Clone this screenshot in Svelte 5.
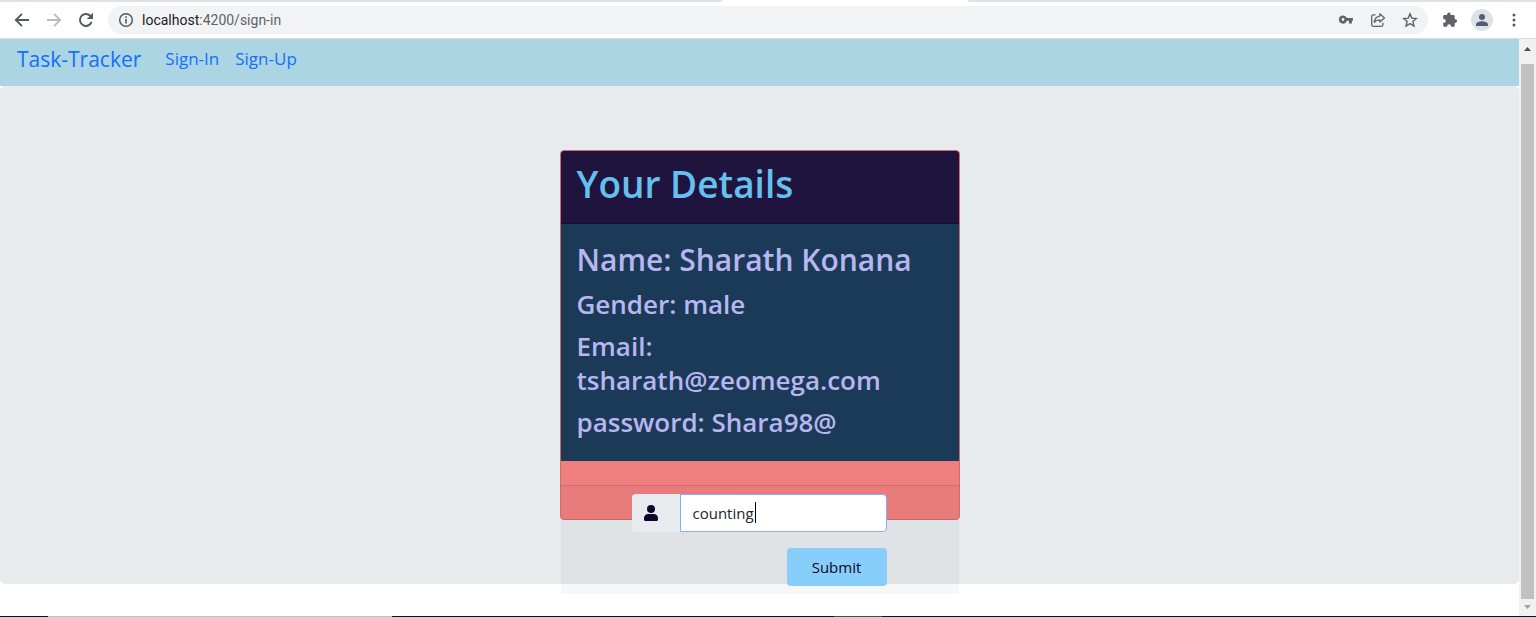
<script>
  let note = $state('counting');
  const details = [
    { label: 'Gender', value: 'male' },
    { label: 'Email', value: 'tsharath@zeomega.com' },
    { label: 'password', value: 'Shara98@' }
  ];
</script>

<div class="window">
  <div class="tabs"><span class="tab-left"></span><span class="tab-active"></span><span class="tab-right"></span></div>
  <header class="toolbar">
    <button aria-label="Back"><svg width="16" height="16" viewBox="0 0 16 16"><path d="M15 8H2.5M8 1.8 1.8 8 8 14.2" fill="none" stroke="#55595e" stroke-width="1.9" /></svg></button>
    <button aria-label="Forward"><svg width="16" height="16" viewBox="0 0 16 16"><path d="M1 8h12.5M8 1.8 14.2 8 8 14.2" fill="none" stroke="#b9bbbe" stroke-width="1.9" /></svg></button>
    <button aria-label="Reload"><svg width="16" height="16" viewBox="0 0 16 16"><path d="M13.6 9.8A6 6 0 1 1 12.3 3.8L13.5 5" fill="none" stroke="#55595e" stroke-width="2" /><path d="M15 .8V7H8.8z" fill="#55595e" /></svg></button>
    <div class="omnibox">
      <svg width="16" height="16" viewBox="0 0 16 16"><circle cx="8" cy="8" r="6.3" fill="none" stroke="#55595e" stroke-width="1.5" /><path d="M8 7v4.5M8 4.3v1.6" stroke="#55595e" stroke-width="1.6" /></svg>
      <span class="url"><b>localhost</b>:4200/sign-in</span>
      <button aria-label="Passwords"><svg width="16" height="16" viewBox="0 0 16 16"><path fill="#5f6368" fill-rule="evenodd" d="M5 3.4a4.1 4.1 0 1 0 3.900 5.400h2V11.500h3V8.800h1V6.100H8.900A4.100 4.100 0 0 0 5 3.400zm0 2.700a1.400 1.400 0 1 1 0 2.800 1.400 1.400 0 0 1 0-2.800z" /></svg></button>
      <button aria-label="Share"><svg width="16" height="16" viewBox="0 0 16 16"><path fill="none" stroke="#5f6368" stroke-width="1.3" stroke-linejoin="round" d="M5.5 2.8H3.2a1.5 1.5 0 0 0-1.5 1.5v8.5a1.5 1.5 0 0 0 1.5 1.5h8.2a1.5 1.5 0 0 0 1.5-1.5v-2M9.8 1.8 14.5 6 9.8 10V7.8C7.4 7.8 5.6 8.5 4.2 10.3 4.6 7 6.3 4.600 9.8 4.100z" /></svg></button>
      <button aria-label="Bookmark"><svg width="16" height="16" viewBox="0 0 16 16"><path fill="none" stroke="#5f6368" stroke-width="1.4" d="m8 1.9 1.8 4.200 4.600.4-3.500 3 1.050 4.500L8 11.600 4.050 14 5.100 9.500l-3.500-3 4.600-.4z" /></svg></button>
    </div>
    <button aria-label="Extensions"><svg width="16" height="16" viewBox="0 0 16 16"><path fill="#5f6368" d="M13.300 7.300h-.6V4.400c0-.8-.6-1.400-1.400-1.400H8.700v-.6a1.800 1.800 0 0 0-3.600 0V3H2.600c-.8 0-1.400.6-1.400 1.400V7h.7a1.900 1.900 0 0 1 0 3.800h-.7v2.600c0 .8.6 1.400 1.400 1.400h2.600v-.7a1.900 1.900 0 0 1 3.800 0v.7h2.300c.8 0 1.400-.6 1.400-1.400v-2.500h.6a1.800 1.800 0 0 0 0-3.600z" /></svg></button>
    <button class="avatar" aria-label="Profile"><svg width="22" height="22" viewBox="0 0 22 22"><circle cx="11" cy="8" r="3" fill="#525d73" /><path d="M5 17v-1.500c0-2.200 4-3.200 6-3.200s6 1 6 3.200V17z" fill="#525d73" /></svg></button>
    <button aria-label="Menu"><svg width="16" height="16" viewBox="0 0 16 16" fill="#55595e"><circle cx="8" cy="3" r="1.500" /><circle cx="8" cy="8" r="1.500" /><circle cx="8" cy="13" r="1.500" /></svg></button>
  </header>

  <div class="viewport">
    <div class="page">
      <nav>
        <a class="brand" href="#home">Task-Tracker</a>
        <a href="#sign-in">Sign-In</a>
        <a href="#sign-up">Sign-Up</a>
      </nav>
      <main>
        <section class="card">
          <div class="card-head"><h1>Your Details</h1></div>
          <div class="card-body">
            <h2>Name: Sharath Konana</h2>
            {#each details as item}
              <h3>{item.label}: {item.value}</h3>
            {/each}
          </div>
          <div class="gap"></div>
          <form class="card-foot" onsubmit={(e) => e.preventDefault()}>
            <div class="group">
              <label for="note" aria-label="User"><svg width="14" height="16" viewBox="0 0 14 16" fill="#10052c"><circle cx="7" cy="4" r="4" /><path d="M4.200 9h5.600A4.200 4.200 0 0 1 14 13.200v1.300c0 .8-.7 1.500-1.500 1.500h-11C.7 16 0 15.300 0 14.500v-1.300A4.200 4.200 0 0 1 4.200 9z" /></svg></label>
              <input id="note" type="text" bind:value={note} />
              <span class="caret"></span>
            </div>
            <button class="submit" type="submit">Submit</button>
          </form>
        </section>
      </main>
    </div>
    <div class="scroll">
      <svg width="9" height="5" viewBox="0 0 9 5"><path d="M1 5h7L4.500 1z" fill="#505050" /></svg>
      <span class="thumb"></span>
      <svg width="9" height="5" viewBox="0 0 9 5"><path d="M1 0h7L4.500 4z" fill="#a3a3a3" /></svg>
    </div>
  </div>
  <div class="taskbar"><span class="t1"></span><span class="t2"></span><span class="t3"></span><span class="t4"></span><span class="t5"></span></div>
</div>

<style>
  :global(body) { background: #fff; }
  * { box-sizing: border-box; }
  .window {
    display: flex; flex-direction: column; min-height: 100vh;
    font-family: "Segoe UI", "Open Sans", "Noto Sans", sans-serif;
    font-size: 15px; color: #212529;
  }
  svg { display: block; flex: none; }
  .tabs { display: flex; height: 2px; }
  .tab-left { flex: 722; background: #dee1e6; border-bottom-right-radius: 2px; }
  .tab-active { flex: 246; }
  .tab-right { flex: 568; background: #dee1e6; border-bottom-left-radius: 2px; }
  .toolbar {
    display: flex; align-items: center; gap: 16px; height: 37px;
    padding: 0 14px; border-bottom: 1px solid #dadce0;
  }
  .toolbar button {
    display: flex; align-items: center; justify-content: center;
    padding: 0; border: 0; background: none; width: 16px; height: 16px;
  }
  .toolbar .avatar { width: 22px; height: 22px; border-radius: 50%; background: #dee1e6; margin: 0 -3px; }
  .omnibox {
    flex: 1; display: flex; align-items: center; gap: 16px; height: 28px;
    margin: 0 -2px; padding: 0 10px; border-radius: 14px; background: #f1f3f4;
  }
  .url { flex: 1; margin-left: -8px; font-family: "Segoe UI", Roboto, sans-serif; font-size: 14px; color: #5f6368; }
  .url b { font-weight: 400; color: #202124; }
  .viewport { flex: 1; display: flex; }
  .page { flex: 1; }
  nav {
    display: flex; align-items: center; gap: 16px; height: 47px; padding: 0 17px 8px;
    background: #abd5e2; font-family: "Comic Sans MS", "Open Sans", sans-serif; font-size: 17px;
  }
  nav a { color: #146eff; text-decoration: none; }
  nav .brand { margin-right: 8px; font-size: 21px; }
  main { padding: 64px 32px; border-radius: 5px; background: #e7ebee; }
  .card {
    width: 400px; margin: 0 auto; border: 1px solid #d06b6b;
    border-radius: 4px; background: #f08080;
  }
  h1, h2, h3 { margin: 0 0 8px; font-weight: 600; }
  .card-head {
    padding: 9px 16px 7px; background: #1f143e; border-bottom: 1px solid #190f36;
    border-radius: 3px 3px 0 0; color: #65c0ed;
  }
  h1 { font-size: 37px; line-height: 48px; }
  .card-body { padding: 17px 16px 14px; background: #1b3a57; color: #b8b6f0; }
  h2 { font-size: 30px; line-height: 38px; }
  h3 { font-size: 26px; line-height: 34px; }
  .gap { height: 24px; }
  .card-foot {
    display: flex; flex-direction: column; align-items: flex-end; gap: 16px;
    margin-bottom: -75px; padding: 8px 72px 8px 71px;
    border-top: 1px solid #cf6c6d; border-radius: 0 0 3px 3px; background: rgba(0, 0, 0, .03);
  }
  .group { position: relative; display: flex; width: 100%; height: 38px; }
  label {
    display: flex; align-items: center; width: 48px; padding-left: 12px;
    border-radius: 4px 0 0 4px; background: #e9ecef;
  }
  input {
    flex: 1; min-width: 0; padding: 0 12px; border: 1px solid #80b0f8; border-radius: 0 4px 4px 0;
    outline: 0; background: #fff; color: #212529; font: inherit;
  }
  .caret { position: absolute; left: 123px; top: 8px; width: 1px; height: 21px; background: #000; }
  .submit {
    width: 100px; height: 38px; padding: 0; border: 0; border-radius: 4px;
    background: #87cefa; color: #10052c; font: inherit;
  }
  .scroll {
    display: flex; flex-direction: column; align-items: center;
    width: 17px; padding: 7px 0 6px; background: #f1f1f1;
  }
  .thumb { flex: 1; width: 13px; margin: 13px 0 6px; background: #c1c1c1; }
  .taskbar { display: flex; height: 1px; background: #10171a; }
  .t1 { flex: 48; }
  .t2 { flex: 344; background: #c0c0c0; }
  .t3 { flex: 442; }
  .t4 { flex: 48; background: #46504f; }
  .t5 { flex: 654; }
</style>
